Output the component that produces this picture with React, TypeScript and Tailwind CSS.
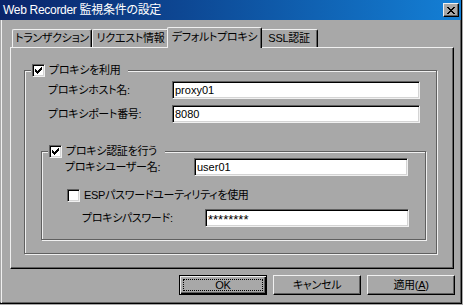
import React from 'react'

const checkPx = ['......#', '.....##', '#...###', '##.###.', '#####..', '.###...', '..#....']
const closePx = ['##....##', '.##..##.', '..####..', '...##...', '..####..', '.##..##.', '##....##']

function Pixels({ rows }: { rows: string[] }) {
  const w = rows[0].length
  const h = rows.length
  return (
    <svg width={w} height={h} viewBox={`0 0 ${w} ${h}`} shapeRendering="crispEdges">
      {rows.flatMap((r, y) =>
        r.split('').map((c, x) => (c === '#' ? <rect key={`${x}-${y}`} x={x} y={y} width="1" height="1" fill="#000" /> : null))
      )}
    </svg>
  )
}

function Check({ checked }: { checked?: boolean }) {
  return (
    <span className="flex h-[13px] w-[13px] shrink-0 items-center justify-center border border-[#606060] border-r-[#f0f0f0] border-b-[#f0f0f0] bg-white shadow-[inset_1px_1px_0_#000,inset_-1px_-1px_0_#d4d4d4]">
      {checked && <Pixels rows={checkPx} />}
    </span>
  )
}

function Field({ value, width }: { value: string; width: string }) {
  return (
    <div className={`flex h-[18px] items-center border border-[#606060] border-r-[#f0f0f0] border-b-[#f0f0f0] bg-white pl-[2px] tracking-normal shadow-[inset_1px_1px_0_#000,inset_-1px_-1px_0_#d4d4d4] ${width}`}>
      {value}
    </div>
  )
}

function Group({ label, checked, className, children }: { label: string; checked?: boolean; className: string; children: React.ReactNode }) {
  return (
    <fieldset className={`border border-[#606060] shadow-[1px_1px_0_#f0f0f0,inset_1px_1px_0_#f0f0f0] ${className}`}>
      <legend className="ml-[6px] flex h-[13px] items-center gap-[4px] bg-[#a8a8a8] pr-[8px] pl-px">
        <Check checked={checked} />
        <span>{label}</span>
      </legend>
      {children}
    </fieldset>
  )
}

const tabs = [
  { label: 'トランザクション', w: 'w-[80px]' },
  { label: 'リクエスト情報', w: 'w-[77px]' },
  { label: 'デフォルトプロキシ', w: 'w-[95px]', active: true },
  { label: 'SSL認証', w: 'w-[58px]' },
]

export default function App() {
  return (
    <div className="h-[305px] w-[463px] bg-[#a8a8a8] text-[11px] leading-none tracking-[-0.3px] whitespace-nowrap text-black [font-family:'Liberation_Sans','Noto_Sans_CJK_JP',sans-serif] [font-feature-settings:'palt']">
      <div className="flex h-[304px] w-[462px] flex-col border-r border-b border-black shadow-[inset_-1px_-1px_0_#606060]">
        {/* title bar */}
        <div className="flex h-[20px] shrink-0 items-center justify-between bg-linear-to-r from-[#0a246a] to-[#1480d6] pr-[2px] pl-[3px]">
          <span className="text-[12px] tracking-[-0.3px] text-white">Web Recorder 監視条件の設定</span>
          <button className="flex h-[14px] w-[16px] items-center justify-center border border-[#f0f0f0] border-r-black border-b-black bg-[#a8a8a8] shadow-[inset_-1px_-1px_0_#606060]">
            <Pixels rows={closePx} />
          </button>
        </div>

        <div className="ml-px flex flex-1 flex-col border-l border-[#f0f0f0] pt-[7px] pl-[8px]">
          {/* tabs */}
          <div className="-mb-px flex h-[21px] items-start pl-[2px]">
            {tabs.map((t) =>
              t.active ? (
                <div
                  key={t.label}
                  className={`relative z-10 -mx-[2px] flex h-[21px] items-start justify-center rounded-t-[2px] border-t border-r border-l border-[#f0f0f0] border-r-black bg-[#a8a8a8] pt-[4px] shadow-[inset_-1px_0_0_#606060] ${t.w}`}
                >
                  {t.label}
                </div>
              ) : (
                <div
                  key={t.label}
                  className={`mt-[2px] flex h-[18px] items-center justify-center rounded-t-[2px] border-t border-r border-l border-[#f0f0f0] border-r-black shadow-[inset_-1px_0_0_#606060] ${t.w}`}
                >
                  {t.label}
                </div>
              )
            )}
          </div>

          {/* panel */}
          <div className="h-[222px] w-[444px] border border-[#f0f0f0] border-r-black border-b-black pt-[16px] pl-[13px] shadow-[inset_-1px_-1px_0_#606060]">
            <Group label="プロキシを利用" checked className="w-[413px] pb-[13px]">
              <div className="flex flex-col gap-[6px] pt-[4px] pl-[23px]">
                <div className="flex items-center">
                  <span className="w-[124px]">プロキシホスト名:</span>
                  <Field value="proxy01" width="w-[248px]" />
                </div>
                <div className="flex items-center">
                  <span className="w-[124px]">プロキシポート番号:</span>
                  <Field value="8080" width="w-[248px]" />
                </div>
              </div>

              <Group label="プロキシ認証を行う" checked className="mt-[22px] ml-[16px] w-[385px] pb-[12px]">
                <div className="flex flex-col pl-[23px]">
                  <div className="flex items-center">
                    <span className="w-[129px]">プロキシユーザー名:</span>
                    <Field value="user01" width="w-[214px]" />
                  </div>
                  <div className="mt-[13px] ml-[2px] flex h-[13px] items-center gap-[4px]">
                    <Check />
                    <span>ESPパスワードユーティリティを使用</span>
                  </div>
                  <div className="mt-[7px] ml-[17px] flex items-center">
                    <span className="w-[123px]">プロキシパスワード:</span>
                    <div className="flex h-[18px] w-[204px] items-center border border-[#606060] border-r-[#f0f0f0] border-b-[#f0f0f0] bg-white pt-[3px] pl-[2px] text-[13px] tracking-normal shadow-[inset_1px_1px_0_#000,inset_-1px_-1px_0_#d4d4d4]">
                      ********
                    </div>
                  </div>
                </div>
              </Group>
            </Group>
          </div>

          {/* buttons */}
          <div className="mt-[6px] flex w-[445px] justify-end gap-[6px]">
            <button className="flex h-[20px] w-[88px] border border-black p-[3px] shadow-[inset_1px_1px_0_#f0f0f0,inset_-1px_-1px_0_#000,inset_-2px_-2px_0_#606060]">
              <span className="flex flex-1 items-center justify-center border border-dotted border-black">OK</span>
            </button>
            <button className="flex h-[20px] w-[88px] items-center justify-center border border-[#f0f0f0] border-r-black border-b-black shadow-[inset_-1px_-1px_0_#606060]">
              キャンセル
            </button>
            <button className="flex h-[20px] w-[88px] items-center justify-center border border-[#f0f0f0] border-r-black border-b-black shadow-[inset_-1px_-1px_0_#606060]">
              適用(<span className="underline">A</span>)
            </button>
          </div>
        </div>
      </div>
    </div>
  )
}
